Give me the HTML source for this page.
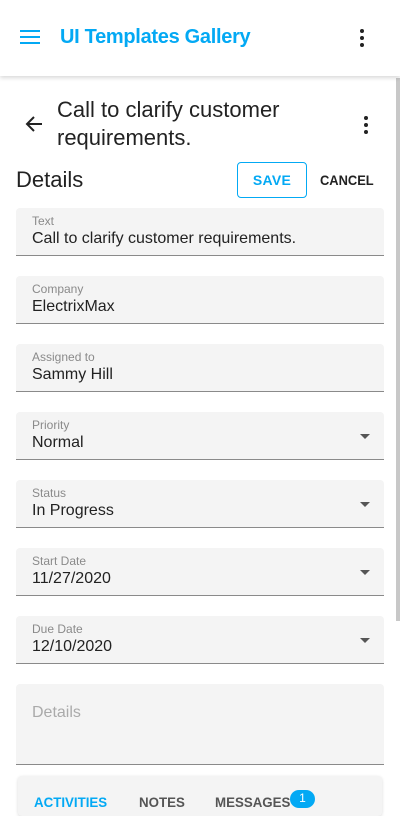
<!DOCTYPE html>
<html><head><style>
*{margin:0;padding:0;box-sizing:border-box}
body{width:400px;height:800px;overflow:hidden;background:#fff;font-family:"Liberation Sans",sans-serif;position:relative;color:#222}
.top{position:absolute;left:0;top:0;width:400px;height:76px;background:#fff;box-shadow:0 2px 4px rgba(0,0,0,.15);z-index:2}
.title{position:absolute;left:60px;top:26px;font-size:20px;color:#03a9f4;font-weight:bold;letter-spacing:-0.3px}
.f{position:absolute;left:16px;width:368px;height:48px;background:#f4f4f4;border-radius:4px 4px 0 0;border-bottom:1px solid #8a8a8a}
.f .l{position:absolute;left:16px;top:6px;font-size:12px;color:#8a8a8a}
.f .v{position:absolute;left:16px;top:22px;font-size:16px;color:#222}
.arr{position:absolute;right:14px;top:22px;width:0;height:0;border-left:5px solid transparent;border-right:5px solid transparent;border-top:5px solid #555}
</style></head><body>
<div class="top">
<svg style="position:absolute;left:20px;top:29px" width="20" height="16"><rect x="0" y="1" width="20" height="2" fill="#03a9f4"/><rect x="0" y="7" width="20" height="2" fill="#03a9f4"/><rect x="0" y="13" width="20" height="2" fill="#03a9f4"/></svg>
<div class="title">UI Templates Gallery</div>
<svg style="position:absolute;left:358px;top:28px" width="8" height="20"><circle cx="4" cy="3" r="2" fill="#222"/><circle cx="4" cy="10" r="2" fill="#222"/><circle cx="4" cy="17" r="2" fill="#222"/></svg>
</div>
<div style="position:absolute;left:396px;top:78px;width:4px;height:543px;background:#c8c8c8"></div>
<svg style="position:absolute;left:24px;top:114px" width="20" height="20" viewBox="0 0 20 20"><path d="M18 10H3M10 3L3 10L10 17" stroke="#222" stroke-width="2" fill="none"/></svg>
<div style="position:absolute;left:57px;top:96px;font-size:22px;line-height:28px;color:#222;width:300px">Call to clarify customer requirements.</div>
<svg style="position:absolute;left:362px;top:115px" width="8" height="20"><circle cx="4" cy="3" r="2" fill="#222"/><circle cx="4" cy="10" r="2" fill="#222"/><circle cx="4" cy="17" r="2" fill="#222"/></svg>
<div style="position:absolute;left:16px;top:167px;font-size:22px;color:#222">Details</div>
<div style="position:absolute;left:237px;top:162px;width:70px;height:36px;border:1px solid #03a9f4;border-radius:4px;color:#03a9f4;font-size:14px;font-weight:bold;text-align:center;line-height:35px;letter-spacing:.3px">SAVE</div>
<div style="position:absolute;left:320px;top:172px;font-size:14px;font-weight:bold;letter-spacing:0;color:#222;transform:scaleX(.92);transform-origin:left">CANCEL</div>
<div class="f" style="top:208px"><div class="l">Text</div><div class="v">Call to clarify customer requirements.</div></div>
<div class="f" style="top:276px"><div class="l">Company</div><div class="v">ElectrixMax</div></div>
<div class="f" style="top:344px"><div class="l">Assigned to</div><div class="v">Sammy Hill</div></div>
<div class="f" style="top:412px"><div class="l">Priority</div><div class="v">Normal</div><div class="arr"></div></div>
<div class="f" style="top:480px"><div class="l">Status</div><div class="v">In Progress</div><div class="arr"></div></div>
<div class="f" style="top:548px"><div class="l">Start Date</div><div class="v">11/27/2020</div><div class="arr"></div></div>
<div class="f" style="top:616px"><div class="l">Due Date</div><div class="v">12/10/2020</div><div class="arr"></div></div>
<div class="f" style="top:684px;height:81px"><div class="v" style="top:20px;color:#aaa">Details</div></div>
<div style="position:absolute;left:18px;top:776px;width:364px;height:40px;background:#f4f4f4;border-radius:4px;box-shadow:0 1px 3px rgba(0,0,0,.15)">
<div style="position:absolute;left:16px;top:18px;font-size:14px;font-weight:bold;color:#03a9f4;transform:scaleX(.95);transform-origin:left">ACTIVITIES</div>
<div style="position:absolute;left:121px;top:18px;font-size:14px;font-weight:bold;color:#555;transform:scaleX(.95);transform-origin:left">NOTES</div>
<div style="position:absolute;left:197px;top:18px;font-size:14px;font-weight:bold;color:#555;transform:scaleX(.95);transform-origin:left">MESSAGES</div>
<div style="position:absolute;left:272px;top:14px;width:25px;height:18px;border-radius:9px;background:#03a9f4;color:#fff;font-size:12px;text-align:center;line-height:16px">1</div>
</div>
</body></html>
